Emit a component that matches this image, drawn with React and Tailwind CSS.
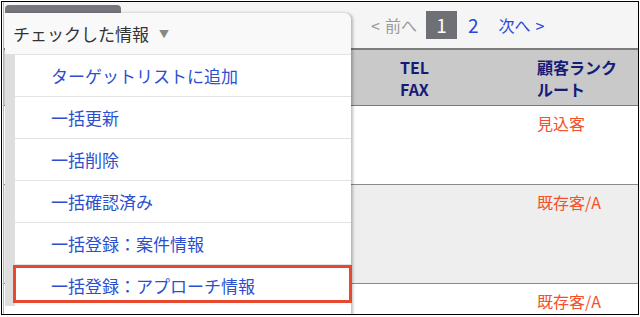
import React from "react";

const JP = { fontFamily: '"Noto Sans CJK JP", "Noto Sans", sans-serif' };

const menuItems = [
  "ターゲットリストに追加",
  "一括更新",
  "一括削除",
  "一括確認済み",
  "一括登録：案件情報",
  "一括登録：アプローチ情報",
];

const rows = [
  { rank: "見込客", height: "h-[78px]", bg: "bg-white" },
  { rank: "既存客/A", height: "h-[99px]", bg: "bg-[#eeeeee]" },
  { rank: "既存客/A", height: "h-[40px]", bg: "bg-white" },
];

const Pagination = () => {
  return (
    <div className="flex h-[46px] items-center bg-[#f5f5f5] pl-[367px] text-[16px]">
      <span className="text-[#9a9a9a]">&lt;</span>
      <span className="ml-[5px] text-[#9a9a9a]">前へ</span>
      <span className="ml-[9px] flex h-[28px] w-[31px] items-center justify-center bg-[#6f6f76] text-[19px] text-white">
        1
      </span>
      <span className="ml-[11px] text-[19px] text-[#2a47d8]">2</span>
      <span className="ml-[20px] text-[#2a47d8]">次へ</span>
      <span className="ml-[5px] text-[#2a47d8]">&gt;</span>
    </div>
  );
};

const CustomerTable = () => {
  return (
    <div>
      <div className="grid h-[58px] grid-cols-[396px_137px_1fr] border-t-2 border-b border-t-[#7c7c7c] border-b-[#7a7a7a] bg-[#c9c9c9] text-[16px] font-bold leading-[22px] text-[#161b78]">
        <div />
        <div className="pt-[6px]">
          <p>TEL</p>
          <p>FAX</p>
        </div>
        <div className="pt-[6px]">
          <p>顧客ランク</p>
          <p>ルート</p>
        </div>
      </div>
      {rows.map((row, i) => (
        <div
          key={i}
          className={`grid grid-cols-[533px_1fr] ${row.height} ${row.bg} ${i > 0 ? "border-t border-[#8a8a8a]" : ""}`}
        >
          <div />
          <p className="pt-[5px] text-[16px] text-[#f5502a]">{row.rank}</p>
        </div>
      ))}
    </div>
  );
};

const CheckedMenu = () => {
  return (
    <div className="absolute left-[3px] top-[3px] bottom-0">
      <div className="h-[12px] w-[116px] rounded-t-[4px] bg-[#76767c]" />
      <div className="absolute left-0 top-[8px] h-[320px] w-[346px] rounded-tr-[7px] bg-white shadow-[2px_0_3px_rgba(0,0,0,0.25)]">
        <div className="flex h-[41px] items-center rounded-tr-[7px] bg-[#f9f9f9] pl-[8px]">
          <span className="text-[17px] text-[#333333]">チェックした情報</span>
          <span className="ml-[10px] text-[10px] text-[#888888]">▼</span>
        </div>
        <div className="flex">
          <div className="w-[10px] bg-[#dedede]" />
          <ul className="flex-1">
            {menuItems.map((item, i) => (
              <li
                key={item}
                className="relative flex h-[42px] items-center border-t border-[#e3e3e3] pl-[36px] text-[17px] text-[#2c4fd0]"
              >
                {item}
                {i === menuItems.length - 1 && (
                  <span className="absolute -left-[2px] -right-[1px] top-0 bottom-[3px] border-[3px] border-[#e8482e]" />
                )}
              </li>
            ))}
          </ul>
        </div>
      </div>
    </div>
  );
};

export default function App() {
  return (
    <div className="h-[317px] w-[640px] bg-white pl-[1px] pt-[1px]" style={JP}>
      <div className="relative h-[314px] w-[638px] overflow-hidden border border-black">
        <div className="ml-[1px] h-full border-l border-[#b5b5b5]">
          <Pagination />
          <CustomerTable />
        </div>
        <CheckedMenu />
      </div>
    </div>
  );
}
